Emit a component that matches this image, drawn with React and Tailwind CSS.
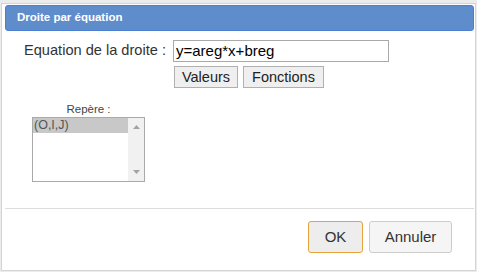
import React, { useState } from "react";

function ListBox() {
  return (
    <div className="flex w-[113px] h-[65px] border border-[#a9a9a9] bg-white">
      <div className="flex-1">
        <div className="h-[15px] bg-[#c8c8c8] pl-[1px] text-[12.5px] leading-[15px] text-[#555]">
          (O,I,J)
        </div>
      </div>
      <div className="flex w-[16px] flex-col items-center justify-between bg-[#f1f1f1] py-[7px]">
        <svg width="7" height="4" viewBox="0 0 7 4">
          <path d="M0 4 L3.5 0 L7 4 Z" fill="#a3a3a3" />
        </svg>
        <svg width="7" height="4" viewBox="0 0 7 4">
          <path d="M0 0 L3.5 4 L7 0 Z" fill="#a3a3a3" />
        </svg>
      </div>
    </div>
  );
}

export default function App() {
  const [equation, setEquation] = useState("y=areg*x+breg");

  return (
    <div className="w-[477px] h-[272px] bg-[#ececec] pt-[3px] pl-[1px] font-['Liberation_Sans',Arial,sans-serif]">
      <div className="flex flex-col w-[475px] h-[268px] border border-[#d4d4d4] bg-white px-[2px] pt-[1px]">
        {/* Title bar */}
        <div className="flex items-center h-[26px] w-[469px] ml-[1px] rounded-[3px] border border-[#4a7fd4] bg-[#5f8dcc] pl-[11px]">
          <span className="text-[11.5px] font-bold text-white">Droite par équation</span>
        </div>

        {/* Equation row */}
        <div className="flex items-center mt-[9px] pl-[20px]">
          <span className="w-[149px] text-[14.6px] text-[#333]">Equation de la droite :</span>
          <input
            value={equation}
            onChange={(e) => setEquation(e.target.value)}
            className="w-[216px] h-[22px] border border-[#a9a9a9] px-[2px] text-[15px] text-black outline-none"
          />
        </div>

        {/* Valeurs / Fonctions */}
        <div className="flex gap-[5px] mt-[4px] pl-[170px]">
          <button className="h-[22px] w-[64px] border border-[#b0b0b0] bg-[#efefef] text-[14.5px] text-[#222]">
            Valeurs
          </button>
          <button className="h-[22px] w-[81px] border border-[#b0b0b0] bg-[#efefef] text-[14.5px] text-[#222]">
            Fonctions
          </button>
        </div>

        {/* Repère */}
        <div className="flex flex-col items-center w-[113px] ml-[28px] mt-[14px]">
          <span className="text-[11.5px] leading-[14px] text-[#444] mb-[1px]">Repère :</span>
          <ListBox />
        </div>

        {/* Separator */}
        <div className="h-px w-[469px] ml-[1px] mt-[26px] bg-[#dddddd]" />

        {/* Footer buttons */}
        <div className="flex justify-end gap-[6px] mt-[12px] pr-[21px]">
          <button className="h-[32px] w-[55px] rounded-[3px] border border-[#e8a33c] bg-[#ededed] text-[15px] text-[#333]">
            OK
          </button>
          <button className="h-[32px] w-[83px] rounded-[3px] border border-[#cccccc] bg-[#f5f5f5] text-[15px] text-[#333]">
            Annuler
          </button>
        </div>
      </div>
    </div>
  );
}
